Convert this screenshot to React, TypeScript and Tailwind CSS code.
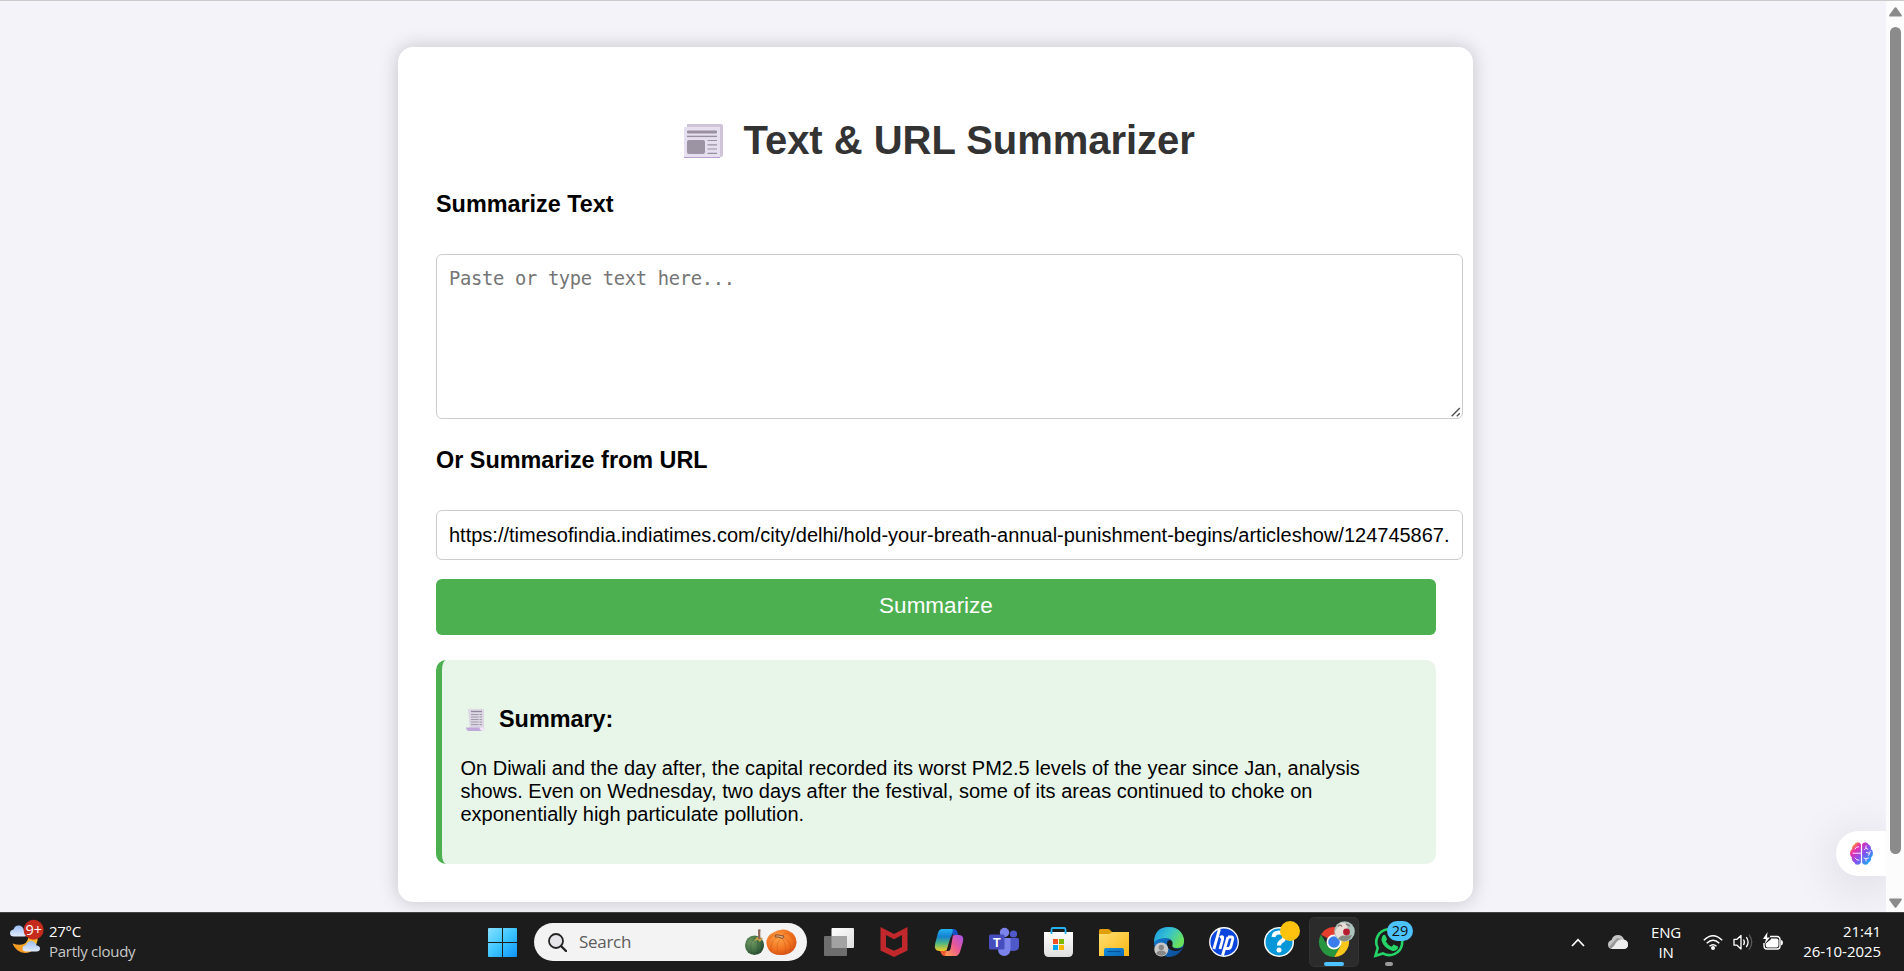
import React from "react";

const sans = "font-['Liberation_Sans',Arial,sans-serif]";
const ui = "font-['Open_Sans','Noto_Sans',sans-serif]";

function NewspaperIcon() {
  return (
    <svg width="39" height="34" viewBox="0 0 39 34" className="mt-[2px] block">
      <path d="M3 0h34a2 2 0 0 1 2 2v29a2 2 0 0 1-2 2H20L3 4z" fill="#cdc4d6" />
      <path d="M0 3h35a1 1 0 0 1 1 1v30H0z" fill="#e6dff0" />
      <path d="M0 33h36v1H0z" fill="#b89fd2" />
      <rect x="3" y="6.5" width="30" height="3" rx="1" fill="#998f9f" />
      <rect x="3" y="11.7" width="30" height="1.4" fill="#998f9f" />
      <rect x="3" y="16" width="18" height="14" rx="2" fill="#9c94a2" />
      <path d="M23.5 16.5H33M23.5 20.8H33M23.5 25H33M23.5 29.3H33" stroke="#998f9f" strokeWidth="1.2" />
    </svg>
  );
}

function ReceiptIcon() {
  return (
    <svg width="19" height="23" viewBox="0 0 19 23" className="block">
      <path d="M2 0.6l1.5.8 1.6-.8 1.6.8 1.6-.8 1.6.8 1.6-.8 1.6.8 1.6-.8 1.6.8 1.7-.8V21q0 2-2 2H4z" fill="#ddd6e4" />
      <path d="M0 19.5h13.5q.3 2.8 2.5 3.5H3Q.5 23 0 19.5z" fill="#c0a9da" />
      <path d="M13.5 19.5H19q-.1 3-2 3.5-3-.3-3.500-3.500z" fill="#eee5f6" />
      <path d="M5 3.500h11" stroke="#8f8699" strokeWidth="1.3" />
      <path d="M5 6.500h7.500M13.500 6.500H16M5 9h7.500M13.500 9H16M5 11.500h7.500M13.500 11.500H16M5 14h7.500M13.500 14H16M5 16.600h7.500M13.500 16.600H16" stroke="#a199a8" strokeWidth="1" />
    </svg>
  );
}

function BrainIcon() {
  return (
    <svg width="23" height="23" viewBox="0 0 23 23" className="block">
      <defs>
        <linearGradient id="brain" gradientUnits="userSpaceOnUse" x1="3" y1="2" x2="21" y2="19">
          <stop offset="0" stopColor="#ffa31a" />
          <stop offset=".22" stopColor="#ec2ba9" />
          <stop offset=".55" stopColor="#8a4df0" />
          <stop offset="1" stopColor="#1fa8ff" />
        </linearGradient>
      </defs>
      <path d="M10.900 2.200Q9.500 0 7 .4 5 .7 4.500 2.500 1.800 3.500 2.100 7 0 8.500 0 11.300q0 2.500 1.800 4Q1.500 19 4.200 20.200 5 22.700 7.500 22.700q2.400 0 3.400-1.900zM12.100 2.200Q13.500 0 16 .4q2 .3 2.500 2.100 2.700 1 2.400 4.500 2.100 1.500 2.100 4.300 0 2.500-1.800 4 .3 3.700-2.400 4.900-.8 2.500-3.300 2.500-2.400 0-3.400-1.900z" fill="url(#brain)" />
      <path d="M3 11.200h8M5 7q.6-2.300 3.600-2.300M5 16q1.300 2.700 4 2.200M16 4v2.200l-1.500 1.500M16 6.200l2 1.200M16.500 10.500l3 .8.700-2M19.500 11.300l-.8 2M14 16l2 .8 2.500-.8M16 16.800V19" stroke="#fbe6ff" strokeWidth="1" fill="none" strokeLinecap="round" />
    </svg>
  );
}

function WeatherIcon() {
  return (
    <svg width="47" height="58" viewBox="0 0 47 58" className="block">
      <defs>
        <linearGradient id="moon" x1="0" y1="1" x2="1" y2="0">
          <stop offset="0" stopColor="#f38a19" />
          <stop offset="1" stopColor="#ffc83b" />
        </linearGradient>
        <linearGradient id="cloud" x1="0" y1="0" x2="0" y2="1">
          <stop offset="0" stopColor="#9bbdf2" />
          <stop offset="1" stopColor="#e1ebff" />
        </linearGradient>
      </defs>
      <path d="M38 25Q36 41 25 41 16 40.500 12.500 31.500 27 36 28.500 25z" fill="url(#moon)" />
      <path d="M14 24.500q-4 0-4-3.500 0-3 3.500-3.500Q15 13 19 13.500q3.500.3 4.700 4Q28 18 28 21q0 3.500-4 3.500z" fill="url(#cloud)" />
      <path d="M26 39.500q-3.500 0-3.500-3t3.500-3.500q1.500-4 5.500-4 4 .5 5 4.500 3.500.3 3.500 3 0 3-3.500 3z" fill="url(#cloud)" />
      <circle cx="33.600" cy="17.800" r="10" fill="#c42b1c" />
      <text x="33.800" y="22.800" textAnchor="middle" fontSize="14.500" fill="#fff" fontFamily="Open Sans, Noto Sans, sans-serif">9+</text>
    </svg>
  );
}

function StartIcon() {
  return (
    <svg width="29" height="29" viewBox="0 0 29 29" className="block">
      <defs>
        <linearGradient id="win" gradientUnits="userSpaceOnUse" x1="0" y1="0" x2="29" y2="29">
          <stop offset="0" stopColor="#86e0ff" />
          <stop offset=".5" stopColor="#3cc5ff" />
          <stop offset="1" stopColor="#0f93f9" />
        </linearGradient>
      </defs>
      <path d="M1 0h13v14H0V1q0-1 1-1zM15 0h13q1 0 1 1v13H15zM0 15h14v14H1q-1 0-1-1zM15 15h14v13q0 1-1 1H15z" fill="url(#win)" />
    </svg>
  );
}

function SearchIcon() {
  return (
    <svg width="19" height="19" viewBox="0 0 19 19" fill="none" stroke="#242424" className="block">
      <circle cx="8" cy="8" r="7" strokeWidth="1.800" fill="#e6e6ea" />
      <path d="M13 13l5 5" strokeWidth="2.400" strokeLinecap="round" />
    </svg>
  );
}

function Pumpkins() {
  return (
    <svg width="52" height="27" viewBox="0 0 52 27" className="block">
      <defs>
        <radialGradient id="green" cx=".35" cy=".35" r=".8">
          <stop offset="0" stopColor="#6f9a63" />
          <stop offset=".6" stopColor="#3f6a42" />
          <stop offset="1" stopColor="#203c28" />
        </radialGradient>
        <radialGradient id="orange" cx=".4" cy=".35" r=".75">
          <stop offset="0" stopColor="#ffa547" />
          <stop offset=".6" stopColor="#f0701f" />
          <stop offset="1" stopColor="#c9480f" />
        </radialGradient>
      </defs>
      <ellipse cx="9.500" cy="16.200" rx="9.500" ry="9.800" fill="url(#green)" />
      <path d="M10 9q-7 5-3 16M11 9q4 7 1 16M12 9q7 5 4 13" stroke="#1f4328" strokeOpacity=".3" fill="none" />
      <path d="M12 8l6 1-3 4-2-2-4 1z" fill="#c5a24a" />
      <path d="M13 10q.3-5 0-9.500l2.500-.3Q15 5 15.500 10z" fill="#8f6658" />
      <path d="M21.500 14.500q-.5-7 6-10.500 8-5.500 15.500-2.500 9 4 8.500 12.500-1 9-10.500 11.500-8 1.500-13-1-5.500-3-6.500-10z" fill="url(#orange)" />
      <path d="M35 8q-10 1-9 14M36 9q-6 6-3 16M37 9q5 7 3 16M38 8q9 4 7 14M36 7q-7-4-11 3M38 6q5-5 10 4" stroke="#b9430e" strokeOpacity=".3" fill="none" />
      <path d="M30 8q0-3 3-2l6 1q-1 4-3 2l-3-1q-2 0-3 0z" fill="#d7ad80" stroke="#774125" strokeWidth=".8" />
    </svg>
  );
}

function Slot({ label, children }: { label: string; children: React.ReactNode }) {
  return (
    <button aria-label={label} className="h-[59px] w-[55px] shrink-0">
      <svg width="55" height="59" viewBox="0 0 55 59" className="block">
        {children}
      </svg>
    </button>
  );
}

function TaskIcons() {
  return (
    <>
      <Slot label="Task view">
        <defs>
          <linearGradient id="tv" x1="0" y1="0" x2="1" y2="1">
            <stop offset="0" stopColor="#fff" />
            <stop offset="1" stopColor="#dedede" />
          </linearGradient>
        </defs>
        <rect x="19.500" y="16" width="22.500" height="20" rx="1" fill="url(#tv)" />
        <rect x="12" y="24" width="23" height="20" rx="1" fill="#6e6e6e" />
        <path d="M19.500 24H35v12H19.500z" fill="#a3a3a3" />
      </Slot>
      <Slot label="McAfee">
        <path d="M13.500 15L27 22l13.500-7v23.500L27 45l-13.500-6.500zM19 23v12l8 3.800L35 35V23l-8 4.300z" fill="#c0282c" fillRule="evenodd" />
      </Slot>
      <Slot label="Copilot">
        <defs>
          <linearGradient id="cpl" x1="0" y1="0" x2="0" y2="1">
            <stop offset="0" stopColor="#25b2f2" />
            <stop offset=".35" stopColor="#1481cf" />
            <stop offset=".65" stopColor="#4fb883" />
            <stop offset="1" stopColor="#f3cd22" />
          </linearGradient>
          <linearGradient id="cpr" x1="1" y1="0" x2="0" y2="1">
            <stop offset="0" stopColor="#a453ee" />
            <stop offset=".5" stopColor="#ec5a92" />
            <stop offset="1" stopColor="#ffa04b" />
          </linearGradient>
        </defs>
        <path d="M27 17h5q2.500 0 3.300 3l1 3H31z" fill="#174fc4" />
        <path d="M18 39h9l-1.500 5H23q-3 0-4-3z" fill="#ef5a32" />
        <path d="M20 17h9.500q2 0 1.200 2.500L26 36q-1 3-4 3h-4.500q-6 0-4.300-7.500l2.600-10Q17 17 20 17z" fill="url(#cpl)" />
        <path d="M35 23h2q5.500 0 3.900 7l-2.600 9Q37 43.500 34 44h-9.500q-2 0-1-2.500L28 27q1.500-4 5-4z" fill="url(#cpr)" />
        <path d="M31 23h2q-4 0-5 4l-3.500 12H26q2 0 2.500-2z" fill="#1c1c1c" />
      </Slot>
      <Slot label="Teams">
        <circle cx="36.500" cy="22" r="3.600" fill="#5059c9" />
        <circle cx="27.500" cy="20.500" r="4.700" fill="#7b83eb" />
        <path d="M31 26h9.500q1.500 0 1.500 1.500V34q0 5-6 5-5 0-5-5z" fill="#5059c9" />
        <path d="M21 26h12.500v11q0 7-6.700 7-5.800-1-5.800-7z" fill="#7b83eb" />
        <rect x="12" y="22.500" width="15.500" height="15" rx="1.500" fill="#464ebd" />
        <text x="19.700" y="34.700" textAnchor="middle" fontSize="12.500" fontWeight="700" fill="#fff" fontFamily="Liberation Sans, sans-serif">T</text>
      </Slot>
      <Slot label="Microsoft Store">
        <defs>
          <linearGradient id="bag" x1="0" y1="0" x2="0" y2="1">
            <stop offset="0" stopColor="#fff" />
            <stop offset="1" stopColor="#dedede" />
          </linearGradient>
        </defs>
        <path d="M12 20h29v20q0 5-5 5H17q-5 0-5-5z" fill="url(#bag)" />
        <path d="M19.500 22v-4.500q0-1.500 1.500-1.500h11q1.500 0 1.500 1.500V22" fill="none" stroke="#27b2f0" strokeWidth="1.800" />
        <path d="M21 27h5v5h-5z" fill="#f25022" />
        <path d="M27 27h5v5h-5z" fill="#7fba00" />
        <path d="M21 33h5v5h-5z" fill="#00a4ef" />
        <path d="M27 33h5v5h-5z" fill="#ffb900" />
      </Slot>
      <Slot label="File Explorer">
        <defs>
          <linearGradient id="fold" x1="0" y1="0" x2="1" y2="1">
            <stop offset="0" stopColor="#ffdf72" />
            <stop offset="1" stopColor="#fbb714" />
          </linearGradient>
          <linearGradient id="dock" x1="0" y1="0" x2="1" y2="1">
            <stop offset="0" stopColor="#1590df" />
            <stop offset="1" stopColor="#0a68b8" />
          </linearGradient>
        </defs>
        <path d="M12 28V18.500q0-1.500 1.500-1.500H21q1 0 2 1l2.500 2.500H30V28z" fill="#e2a008" />
        <path d="M12 22h9q2 0 3.500-1.500.5-.5 1.500-.5h16v24H12z" fill="url(#fold)" />
        <path d="M17 44v-6q0-2 2-2h16q2 0 2 2v6z" fill="url(#dock)" />
        <path d="M20.500 39.500h13" stroke="#075194" strokeWidth="1.200" />
      </Slot>
      <Slot label="Edge">
        <defs>
          <linearGradient id="edgeTop" x1="0" y1="0" x2="1" y2=".5">
            <stop offset="0" stopColor="#1994df" />
            <stop offset=".5" stopColor="#35c1d2" />
            <stop offset="1" stopColor="#6ae05a" />
          </linearGradient>
          <linearGradient id="edgeBody" x1="0" y1="0" x2="1" y2="1">
            <stop offset="0" stopColor="#1587dc" />
            <stop offset="1" stopColor="#0c4691" />
          </linearGradient>
        </defs>
        <circle cx="27" cy="30" r="15" fill="url(#edgeBody)" />
        <path d="M12 30Q12.500 15 27 15q12 0 15 12 1 9-7 9-6 0-5-3 1.500-7-6-7Q16 26 12 30z" fill="url(#edgeTop)" />
        <path d="M25 32q0-4 3-4 3 1 2.500 4-.6 2 .5 3.500 2 1.500 5 1.300 3-.3 5-1.300-3 3.500-8 3.500-8-1-8-7z" fill="#1c1c1c" />
        <circle cx="19.300" cy="37.500" r="7" fill="#c9c9c9" />
        <circle cx="19.300" cy="35.500" r="2.700" fill="#878787" />
        <path d="M14.500 42q0-3.500 4.800-3.500t4.800 3.500q-4.800 3.500-9.600 0z" fill="#878787" />
      </Slot>
      <Slot label="HP">
        <circle cx="27" cy="30" r="14.900" fill="#fff" />
        <circle cx="27" cy="30" r="13.600" fill="#0a46dc" />
        <path d="M22.500 17l-5.600 20M23 25.500q3.500-2 2.700 1.300L23 37M31 25l-5.500 18.500M31 25h3.300q2 0 1.500 2l-2 7.500q-.6 2-2.500 2H28" stroke="#fff" strokeWidth="2.800" fill="none" />
      </Slot>
      <Slot label="Help">
        <circle cx="27" cy="30" r="15" fill="#fff" />
        <circle cx="27" cy="30" r="13.500" fill="#0697d8" />
        <path d="M21.500 25q.5-4.500 5.500-4.500 5.500 0 5.500 4.200 0 2.800-3 4.600-2.500 1.500-2.500 4.200" stroke="#fff" strokeWidth="4" fill="none" />
        <circle cx="27" cy="38" r="2.500" fill="#fff" />
        <circle cx="38" cy="19" r="10" fill="#ffc20e" />
      </Slot>
      <Slot label="Chrome">
        <rect x="2.500" y="5.500" width="49" height="49" rx="5" fill="#2b2b2b" stroke="#343434" />
        <path d="M27 30L14 22.500A15 15 0 0 1 40 22.500z" fill="#e43e2f" />
        <path d="M27 22.500h13A15 15 0 0 1 27 45l6.500-11.200z" fill="#fcc61b" />
        <path d="M14 22.500A15 15 0 0 0 27 45l6.500-11.250L27 30l-6.500 3.700z" fill="#27963f" />
        <circle cx="27" cy="30" r="7.500" fill="#fff" />
        <circle cx="27" cy="30" r="5.800" fill="#3b7ded" />
        <circle cx="37.500" cy="19.500" r="10.300" fill="#a9c3bd" />
        <path d="M32 12q5-3 8 1l1 7-7 8q-5-2-6-8z" fill="#e8ded8" />
        <path d="M31 14.500q2-3 4 0M39 12l4 2" stroke="#8c7a76" strokeWidth="1.500" fill="none" />
        <path d="M31 27q3-5 8-3l6-1q-3 7-9 6z" fill="#858a80" />
        <circle cx="39.500" cy="20" r="3.400" fill="#b61d2f" />
        <rect x="17" y="50" width="20" height="4" rx="2" fill="#4cc2ff" />
      </Slot>
      <Slot label="WhatsApp">
        <path d="M13.500 43.700l2.200-7.700a13 13 0 1 1 5.200 5.400z" fill="none" stroke="#25d366" strokeWidth="2.600" />
        <path d="M20.300 24.200q1.500-2.200 3-.9l1.700 3.700q.2.700-1.300 2.200 2.200 4 6 5.500l1.900-2.200 4.400 2q.6.500-.5 2.500-1.700 2.500-5 2-9-3-11-10.500 0-2.500.8-4.300z" fill="#25d366" />
        <rect x="25" y="9" width="26" height="20" rx="10" fill="#4cc2ff" />
        <text x="38" y="24.200" textAnchor="middle" fontSize="14.500" fill="#111" fontFamily="Open Sans, Noto Sans, sans-serif">29</text>
        <rect x="23" y="50" width="8" height="4" rx="2" fill="#9a9a9a" />
      </Slot>
    </>
  );
}

function TrayIcons() {
  return (
    <svg width="80" height="20" viewBox="0 0 80 20" className="block" fill="none" stroke="#fff">
      <path d="M.8 8.200q9.200-9 18.400 0M3.700 11.200q6.300-6 12.600 0M6.500 14.200q3.500-3 7 0" strokeWidth="1.500" />
      <circle cx="10" cy="16" r="2" fill="#fff" stroke="none" />
      <path d="M31 7.300h3l4-3.800v13.500l-4-3.800h-3z" strokeWidth="1.300" strokeLinejoin="round" />
      <path d="M40.500 7.500q1.800 2.700 0 5.500M43.300 5.200q3.600 5 0 10" strokeWidth="1.300" />
      <path d="M46 2.700q5.500 7.500 0 15" stroke="#5a5a5a" strokeWidth="1.300" />
      <path d="M67 4.500h7q3 0 3 3v6.500q0 3-3 3H64q-3 0-3-3v-3" strokeWidth="1.400" />
      <path d="M68 6.500h5.500q2 0 2 2v5q0 2-2 2H64.500q-1.800 0-1.800-2v-2l5-4z" fill="#fff" stroke="none" />
      <path d="M78 8q2 .3 2 2.700t-2 2.700z" fill="#fff" stroke="none" />
      <path d="M64.500 0l-4.500 7h3l-1.500 5 5.500-6.500H64z" fill="#fff" stroke="none" />
    </svg>
  );
}

function Taskbar() {
  return (
    <footer className={`${ui} flex h-[59px] shrink-0 items-start overflow-hidden bg-[#1c1c1c] text-white shadow-[inset_0_1px_0_#444448]`}>
      <div className="flex w-[488px] shrink-0">
        <WeatherIcon />
        <div className="ml-[2px] pt-[9px] text-[15px] leading-5 tracking-[-0.28px]">
          <div>27°C</div>
          <div className="text-[#c8c8c8]">Partly cloudy</div>
        </div>
      </div>
      <div className="mt-4 shrink-0">
        <StartIcon />
      </div>
      <div className="mt-[11px] ml-[17px] flex h-[38px] w-[273px] shrink-0 items-center rounded-full bg-[#f3f3f3] pl-[14px]">
        <SearchIcon />
        <span className="ml-[12px] w-[166px] text-[17px] leading-6 tracking-[-0.3px] text-[#5c5c5c]">Search</span>
        <Pumpkins />
      </div>
      <div className="ml-[5px] flex shrink-0">
        <TaskIcons />
      </div>
      <svg width="14" height="9" viewBox="0 0 14 9" className="mt-[26px] ml-[154px] block shrink-0">
        <path d="M1 8l6-6.300L13 8" fill="none" stroke="#fff" strokeWidth="1.700" />
      </svg>
      <svg width="20" height="14" viewBox="0 0 20 14" className="mt-[23px] ml-[23px] block shrink-0">
        <path d="M4 14q-4-.5-4-4.500 0-3.500 3.500-4.500Q5 0 10 0q4.500 0 6 4.500 4 1 4 5T16 14z" fill="#c4c4c4" />
        <path d="M3 13q3-1 5-5 3-4 7.500-3.500 4.500 1 4.500 5T16 14H4z" fill="#eeeeee" />
        <path d="M1 12l8-9 5 1q-4 0-6.500 4Q6 12 3 13.700z" fill="#999" />
      </svg>
      <div className="mt-[10px] ml-[18px] w-10 shrink-0 text-center text-[15px] leading-5 tracking-[-0.2px]">
        <div>ENG</div>
        <div>IN</div>
      </div>
      <div className="mt-5 ml-[17px] shrink-0">
        <TrayIcons />
      </div>
      <div className="mt-[9px] mr-[23px] ml-auto text-right text-[15px] leading-5 tracking-[-0.05px]">
        <div>21:41</div>
        <div>26-10-2025</div>
      </div>
    </footer>
  );
}

function Scrollbar() {
  return (
    <div className="flex w-[18px] shrink-0 flex-col items-center bg-[#fcfcfc] pt-[6px] pb-[4px]">
      <svg width="13" height="10" viewBox="0 0 13 10" className="block shrink-0">
        <path d="M5.500 .8q1-1 2 0L12.700 8q.5 1.500-1 1.500H1.300Q-.2 9.500 .3 8z" fill="#8b8b8b" />
      </svg>
      <div className="mt-[10px] h-[827px] w-[11px] shrink-0 rounded-full bg-[#8b8b8b]" />
      <svg width="13" height="10" viewBox="0 0 13 10" className="mt-auto block shrink-0">
        <path d="M5.500 9.200q1 1 2 0L12.700 2q.5-1.500-1-1.500H1.300Q-.2 .5 .3 2z" fill="#8b8b8b" />
      </svg>
    </div>
  );
}

export default function App() {
  return (
    <div className="flex h-[971px] w-[1904px] flex-col overflow-hidden bg-[#f4f3f9]">
      <div className="relative flex h-[912px] border-t border-[#cbcbcb]">
        <main className="grow overflow-hidden pt-[46px] pl-[398px]">
          <section className={`${sans} flex h-[855px] w-[1075px] flex-col rounded-[15px] bg-white px-[38px] text-black shadow-[0_0_19px_rgba(0,0,0,0.2)]`}>
            <h1 className="mt-[70px] flex h-[46px] items-center pl-[248px] text-[40px] leading-[46px] font-bold text-[#333]">
              <NewspaperIcon />
              <span className="ml-[20.5px] tracking-[-0.03px] whitespace-nowrap">Text &amp; URL Summarizer</span>
            </h1>
            <h3 className="mt-[28px] text-[23.4px] leading-[27px] font-bold">Summarize Text</h3>
            <div className="relative mt-[36px] h-[165px] w-[1027px] shrink-0">
              <textarea
                placeholder="Paste or type text here..."
                className="block h-[165px] w-[1027px] resize-none rounded-[6px] border border-[#ccc] bg-white p-[12px] font-['DejaVu_Sans_Mono',monospace] text-[18.8px] leading-[23px] tracking-[-0.32px] text-black outline-none placeholder:text-[#757575]"
              />
              <svg width="10" height="10" viewBox="0 0 10 10" className="absolute right-[2px] bottom-[2px]">
                <path d="M.7 9.300L8.800 1M5.800 9.300L8.800 6.300" stroke="#505050" strokeWidth="1.400" />
              </svg>
            </div>
            <h3 className="mt-[28px] text-[23.4px] leading-[27px] font-bold">Or Summarize from URL</h3>
            <input
              defaultValue="https://timesofindia.indiatimes.com/city/delhi/hold-your-breath-annual-punishment-begins/articleshow/124745867."
              className="mt-[36px] block h-[50px] w-[1027px] shrink-0 rounded-[6px] border border-[#ccc] bg-white px-[12px] text-[20px] text-black outline-none"
            />
            <button className="mt-[19px] h-[56px] w-[1000px] shrink-0 rounded-[6px] bg-[#4caf50] pb-[2px] text-[22.5px] text-white">Summarize</button>
            <div className="mt-[25px] h-[204px] w-[1000px] shrink-0 rounded-[10px] border-l-[6px] border-[#4caf50] bg-[#e8f5e9] pl-[18.5px]">
              <div className="mt-[46px] flex h-[27px] items-center pl-[5.5px]">
                <ReceiptIcon />
                <h3 className="ml-[14px] text-[23.4px] leading-[27px] font-bold">Summary:</h3>
              </div>
              <p className="mt-[24px] w-[940px] text-[20px] leading-[23px]">
                On Diwali and the day after, the capital recorded its worst PM2.5 levels of the year since Jan, analysis
                shows. Even on Wednesday, two days after the festival, some of its areas continued to choke on
                exponentially high particulate pollution.
              </p>
            </div>
          </section>
        </main>
        <Scrollbar />
        <div className="absolute top-[830px] right-[18px] flex h-[45px] w-[50px] items-center rounded-l-full bg-white pl-[14px] shadow-[0_8px_50px_rgba(0,0,0,0.14)] [clip-path:inset(-80px_0_-36px_-80px)]">
          <BrainIcon />
        </div>
      </div>
      <Taskbar />
    </div>
  );
}
